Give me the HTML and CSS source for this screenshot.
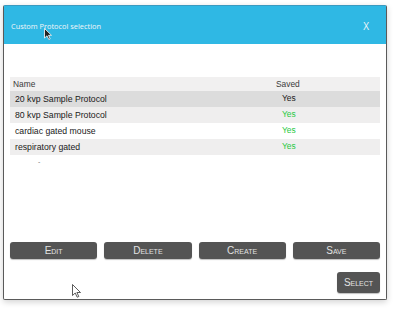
FILE: index.html
```html
<!DOCTYPE html>
<html>
<head>
<meta charset="utf-8">
<link rel="stylesheet" href="styles.css">
</head>
<body>
<div class="dialog">
  <div class="header">
    <span class="title">Custom Protocol selection</span>
    <span class="close">X</span>
  </div>
  <div class="content">
    <div class="table">
      <div class="row head"><span class="name">Name</span><span class="saved">Saved</span></div>
      <div class="row sel"><span class="name">20 kvp Sample Protocol</span><span class="saved">Yes</span></div>
      <div class="row alt"><span class="name">80 kvp Sample Protocol</span><span class="saved ok">Yes</span></div>
      <div class="row"><span class="name">cardiac gated mouse</span><span class="saved ok">Yes</span></div>
      <div class="row alt"><span class="name">respiratory gated</span><span class="saved ok">Yes</span></div>
    </div>
    <div class="dash">-</div>
    <div class="actions">
      <button class="btn">Edit</button>
      <button class="btn">Delete</button>
      <button class="btn">Create</button>
      <button class="btn">Save</button>
    </div>
    <div class="footer">
      <button class="btn select">Select</button>
    </div>
  </div>
</div>
<svg class="cursor c1" width="8" height="12" viewBox="0 0 8 12"><path d="M0.5 0.5 L0.5 10 L3 7.8 L4.8 11.5 L6.2 10.8 L4.5 7.3 L7.5 7.3 Z" fill="#222" stroke="#fff" stroke-width="0.8"/></svg>
<svg class="cursor c2" width="10" height="14" viewBox="0 0 10 14"><path d="M0.5 0.5 L0.5 11.5 L3.2 9 L5.2 13.2 L6.8 12.5 L4.9 8.5 L8.5 8.5 Z" fill="#fff" stroke="#333" stroke-width="0.8"/></svg>
</body>
</html>
```
FILE: styles.css
```css
html, body {
  margin: 0;
  padding: 0;
  background: #ffffff;
}
body {
  width: 403px;
  height: 310px;
  position: relative;
  font-family: "Liberation Sans", Arial, sans-serif;
}
.dialog {
  margin: 5px 0 0 3px;
  width: 382px;
  height: 293px;
  border: 1px solid #5a5a5a;
  border-top-color: #3a9ac0;
  border-radius: 2px;
  display: flex;
  flex-direction: column;
  box-shadow: 0 2px 6px rgba(0,0,0,0.18);
  background: #fff;
}
.header {
  height: 38px;
  background: #2fb8e4;
  display: flex;
  align-items: center;
  justify-content: space-between;
  padding: 0 17px 0 7px;
  color: #f2f6f8;
}
.title {
  font-family: "Open Sans", "Liberation Sans", sans-serif;
  font-size: 7.4px;
  margin-top: 2px;
}
.close {
  font-family: "Open Sans", sans-serif;
  font-size: 10px;
  margin-top: 2px;
}
.content {
  flex: 1;
  display: flex;
  flex-direction: column;
  padding: 33px 6px 6px 6px;
}
.table {
  font-size: 8.7px;
  color: #1a1a1a;
}
.row {
  display: flex;
  height: 16px;
  align-items: center;
  background: #fff;
}
.row.head {
  height: 14px;
  background: #f1f0f0;
  color: #3a3a3a;
  font-size: 8.4px;
}
.row.sel { background: #dcdcdc; }
.row.alt { background: #efeeee; }
.name {
  width: 261px;
  padding-left: 5px;
}
.row.head .name { width: 263px; padding-left: 3px; }
.saved {
  font-size: 8.4px;
  padding-left: 6px;
  margin-top: -3px;
}
.row.head .saved { margin-top: 0; padding-left: 0; }
.saved.ok { color: #27c93f; }
.dash {
  font-size: 7px;
  color: #777;
  padding-left: 28px;
  margin-top: 3px;
  line-height: 8px;
}
.actions {
  margin-top: auto;
  display: grid;
  grid-template-columns: repeat(4, 1fr);
  gap: 7px;
}
.btn {
  height: 17px;
  border: none;
  border-radius: 3px;
  background: #545454;
  color: #e2e2e2;
  font-family: "Liberation Sans", Arial, sans-serif;
  font-size: 10px;
  font-variant: small-caps;
  padding: 0;
  box-shadow: 0 1px 1px rgba(0,0,0,0.25);
}
.footer {
  display: flex;
  justify-content: flex-end;
  margin-top: 13px;
}
.btn.select {
  width: 43px;
  height: 21px;
  font-size: 10px;
}
.cursor {
  position: absolute;
}
.c1 { left: 44px; top: 28px; }
.c2 { left: 72px; top: 284px; }
```
